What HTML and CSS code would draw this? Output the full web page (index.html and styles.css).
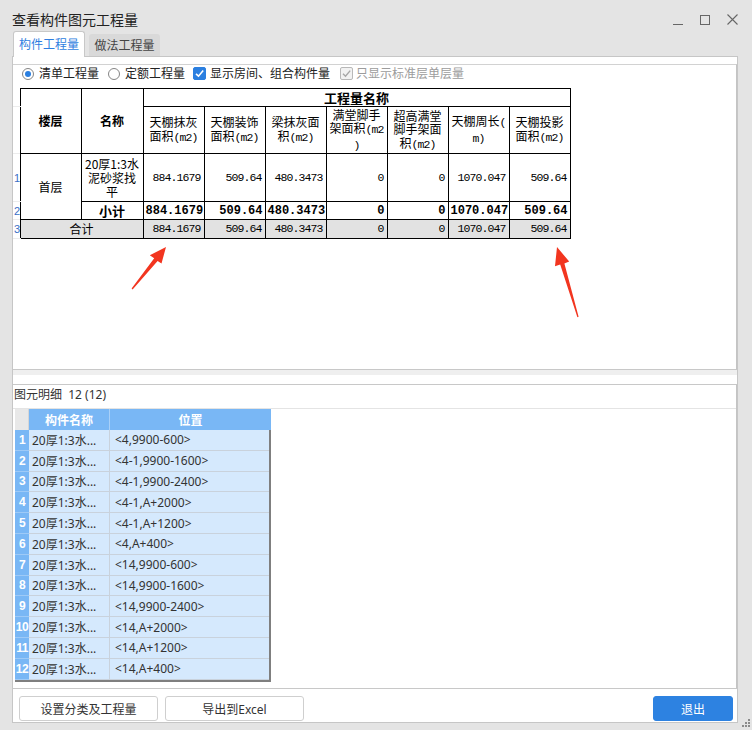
FILE: index.html
```html
<!DOCTYPE html>
<html lang="zh-CN">
<head>
<meta charset="utf-8">
<title>查看构件图元工程量</title>
<link rel="stylesheet" href="styles.css">
</head>
<body>
<div class="window">
  <div class="titlebar">
    <span class="title">查看构件图元工程量</span>
    <div class="controls">
      <svg class="ctl" width="10" height="10" viewBox="0 0 10 10"><path d="M0 9.5H10" stroke="#666" stroke-width="1"/></svg>
      <svg class="ctl max" width="10" height="10" viewBox="0 0 10 10"><rect x="0.5" y="0.5" width="9" height="9" fill="none" stroke="#666" stroke-width="1"/></svg>
      <svg class="ctl close" width="11" height="11" viewBox="0 0 11 11"><path d="M0.5 0.5L10.5 10.5M10.5 0.5L0.5 10.5" stroke="#666" stroke-width="1.1"/></svg>
    </div>
  </div>

  <div class="tabs">
    <div class="tab active">构件工程量</div>
    <div class="tab">做法工程量</div>
  </div>

  <div class="content">
    <div class="upper">
      <div class="options">
        <label class="opt"><span class="radio checked"></span>清单工程量</label>
        <label class="opt gap9"><span class="radio"></span>定额工程量</label>
        <label class="opt gap8"><span class="check checked"><svg width="11" height="11" viewBox="0 0 11 11"><path d="M2 5.8L4.5 8.2L9.2 2.6" fill="none" stroke="#fff" stroke-width="1.6"/></svg></span>显示房间、组合构件量</label>
        <label class="opt gap10 disabled"><span class="check dis"><svg width="11" height="11" viewBox="0 0 11 11"><path d="M2 5.8L4.5 8.2L9.2 2.6" fill="none" stroke="#a6a6a6" stroke-width="1.4"/></svg></span>只显示标准层单层量</label>
      </div>

      <table class="qty">
        <colgroup>
          <col class="c-rn"><col class="c-floor"><col class="c-name">
          <col class="c-q"><col class="c-q"><col class="c-q"><col class="c-q"><col class="c-q"><col class="c-q"><col class="c-q">
        </colgroup>
        <tr class="h1">
          <td class="rn"></td>
          <td rowspan="2" class="hb">楼层</td>
          <td rowspan="2" class="hb">名称</td>
          <td colspan="7" class="hb big">工程量名称</td>
        </tr>
        <tr class="h2">
          <td class="rn"></td>
          <td>天棚抹灰<br>面积<span class="m">(m2)</span></td>
          <td>天棚装饰<br>面积<span class="m">(m2)</span></td>
          <td>梁抹灰面<br>积<span class="m">(m2)</span></td>
          <td class="three">满堂脚手<br>架面积<span class="m">(m2</span><br><span class="m">)</span></td>
          <td class="three">超高满堂<br>脚手架面<br>积<span class="m">(m2)</span></td>
          <td>天棚周长<span class="m">(</span><br><span class="m">m)</span></td>
          <td>天棚投影<br>面积<span class="m">(m2)</span></td>
        </tr>
        <tr class="d1">
          <td class="rn">1</td>
          <td rowspan="2">首层</td>
          <td>20厚1:3水<br>泥砂浆找<br>平</td>
          <td class="n">884.1679</td>
          <td class="n">509.64</td>
          <td class="n">480.3473</td>
          <td class="n">0</td>
          <td class="n">0</td>
          <td class="n">1070.047</td>
          <td class="n">509.64</td>
        </tr>
        <tr class="d2">
          <td class="rn">2</td>
          <td class="hb big">小计</td>
          <td class="nb">884.1679</td>
          <td class="nb">509.64</td>
          <td class="nb">480.3473</td>
          <td class="nb">0</td>
          <td class="nb">0</td>
          <td class="nb">1070.047</td>
          <td class="nb">509.64</td>
        </tr>
        <tr class="d3">
          <td class="rn">3</td>
          <td colspan="2">合计</td>
          <td class="n">884.1679</td>
          <td class="n">509.64</td>
          <td class="n">480.3473</td>
          <td class="n">0</td>
          <td class="n">0</td>
          <td class="n">1070.047</td>
          <td class="n">509.64</td>
        </tr>
      </table>
    </div>

    <div class="splitter"></div>

    <div class="lower">
      <div class="detail-label">图元明细&nbsp;&nbsp;12 (12)</div>
      <div class="grid">
        <div class="ghead">
          <div class="gc corner"></div>
          <div class="gc gname">构件名称</div>
          <div class="gc gpos">位置</div>
        </div>
        <div class="gbody">
          <div class="grow"><div class="gn">1</div><div class="gt gname">20厚1:3水...</div><div class="gt gpos">&lt;4,9900-600&gt;</div></div>
          <div class="grow"><div class="gn">2</div><div class="gt gname">20厚1:3水...</div><div class="gt gpos">&lt;4-1,9900-1600&gt;</div></div>
          <div class="grow"><div class="gn">3</div><div class="gt gname">20厚1:3水...</div><div class="gt gpos">&lt;4-1,9900-2400&gt;</div></div>
          <div class="grow"><div class="gn">4</div><div class="gt gname">20厚1:3水...</div><div class="gt gpos">&lt;4-1,A+2000&gt;</div></div>
          <div class="grow"><div class="gn">5</div><div class="gt gname">20厚1:3水...</div><div class="gt gpos">&lt;4-1,A+1200&gt;</div></div>
          <div class="grow"><div class="gn">6</div><div class="gt gname">20厚1:3水...</div><div class="gt gpos">&lt;4,A+400&gt;</div></div>
          <div class="grow"><div class="gn">7</div><div class="gt gname">20厚1:3水...</div><div class="gt gpos">&lt;14,9900-600&gt;</div></div>
          <div class="grow"><div class="gn">8</div><div class="gt gname">20厚1:3水...</div><div class="gt gpos">&lt;14,9900-1600&gt;</div></div>
          <div class="grow"><div class="gn">9</div><div class="gt gname">20厚1:3水...</div><div class="gt gpos">&lt;14,9900-2400&gt;</div></div>
          <div class="grow"><div class="gn">10</div><div class="gt gname">20厚1:3水...</div><div class="gt gpos">&lt;14,A+2000&gt;</div></div>
          <div class="grow"><div class="gn">11</div><div class="gt gname">20厚1:3水...</div><div class="gt gpos">&lt;14,A+1200&gt;</div></div>
          <div class="grow"><div class="gn">12</div><div class="gt gname">20厚1:3水...</div><div class="gt gpos">&lt;14,A+400&gt;</div></div>
        </div>
      </div>
    </div>

    <div class="buttons">
      <button class="btn">设置分类及工程量</button>
      <button class="btn">导出到Excel</button>
      <button class="btn primary">退出</button>
    </div>
  </div>

  <svg class="grip" width="8" height="8" viewBox="0 0 8 8">
    <rect x="6" y="0" width="2" height="2" fill="#8a8a8a"/>
    <rect x="3" y="3" width="2" height="2" fill="#8a8a8a"/>
    <rect x="6" y="3" width="2" height="2" fill="#8a8a8a"/>
    <rect x="0" y="6" width="2" height="2" fill="#8a8a8a"/>
    <rect x="3" y="6" width="2" height="2" fill="#8a8a8a"/>
    <rect x="6" y="6" width="2" height="2" fill="#8a8a8a"/>
  </svg>

  <svg class="arrows" width="752" height="730" viewBox="0 0 752 730">
    <polygon points="166,247 161.5,263.5 157.6,260.9 132.6,289.4 131.6,288.6 154.2,258.2 149.8,255.2" fill="#f2351f"/>
    <polygon points="557,247 569.2,261.6 564.4,263.4 578.6,316.8 577.4,317.2 560.2,264.6 555,266.2" fill="#f2351f"/>
  </svg>
</div>
</body>
</html>
```
FILE: styles.css
```css
* { box-sizing: border-box; }
html, body { margin: 0; padding: 0; }
body {
  width: 752px;
  height: 730px;
  overflow: hidden;
  background: #e4e4e4;
  font-family: "Noto Sans", "Noto Sans CJK SC", sans-serif;
  font-size: 12px;
  color: #333;
}

.window {
  position: relative;
  width: 752px;
  height: 730px;
  background: #e4e4e4;
  display: flex;
  flex-direction: column;
}

/* title bar */
.titlebar {
  height: 31px;
  padding: 8px 14px 0 12px;
  display: flex;
  align-items: center;
}
.title {
  font-size: 14px;
  line-height: 23px;
  color: #222;
}
.controls {
  margin-left: auto;
  display: flex;
  align-items: center;
}
.ctl { display: block; }
.ctl.max { margin-left: 17px; }
.ctl.close { margin-left: 17px; }

/* tabs */
.tabs {
  height: 25px;
  display: flex;
  align-items: flex-end;
  padding-left: 13px;
  gap: 4px;
}
.tab {
  width: 71px;
  height: 22px;
  background: #d9d9d9;
  color: #444;
  font-size: 12px;
  display: flex;
  align-items: center;
  justify-content: center;
  border-radius: 3px 3px 0 0;
}
.tab.active {
  width: 72px;
  height: 26px;
  margin-bottom: -1px;
  padding-bottom: 2px;
  background: #fff;
  color: #2f7ee0;
  border: 1px solid #c8c8c8;
  border-bottom: none;
  position: relative;
  z-index: 1;
}

/* content panel */
.content {
  margin: 0 14px 0 12px;
  height: 667px;
  background: #fff;
  border: 1px solid #c6c6c6;
  padding-top: 7px;
  display: flex;
  flex-direction: column;
}

.upper {
  height: 306px;
  border-top: 1px solid #d2d2d2;
  border-right: 1px solid #c4c4c4;
  border-bottom: 1px solid #c8c8c8;
}
.options {
  height: 23px;
  display: flex;
  align-items: center;
  padding: 0 0 6px 9px;
  font-size: 12px;
  color: #222;
}
.opt {
  display: flex;
  align-items: center;
  line-height: 17px;
}
.gap9 { margin-left: 9px; }
.gap8 { margin-left: 8px; }
.gap10 { margin-left: 10px; }
.opt.disabled { color: #9c9c9c; }
.radio {
  width: 12px;
  height: 12px;
  border: 1px solid #858585;
  border-radius: 50%;
  background: #fff;
  margin-right: 5px;
  display: flex;
  align-items: center;
  justify-content: center;
}
.radio.checked::after {
  content: "";
  width: 6px;
  height: 6px;
  border-radius: 50%;
  background: #2b7fe0;
}
.check {
  width: 13px;
  height: 13px;
  border-radius: 2px;
  margin-right: 4px;
  display: flex;
  align-items: center;
  justify-content: center;
}
.check svg { display: block; }
.check.checked { background: #2b7fe0; border: 1px solid #2b7fe0; }
.check.dis { background: #f2f2f2; border: 1px solid #b8b8b8; margin-right: 3px; }

/* quantity table */
.qty {
  border-collapse: collapse;
  table-layout: fixed;
  width: 557px;
  font-family: "Noto Sans CJK SC", sans-serif;
  color: #000;
}
.c-rn { width: 7px; }
.c-floor { width: 61px; }
.c-name { width: 62px; }
.c-q { width: 61px; }
.qty td {
  border: 1px solid #000;
  padding: 0 2px;
  font-size: 12px;
  line-height: 14px;
  text-align: center;
  vertical-align: middle;
  white-space: nowrap;
  overflow: hidden;
}
.qty td.three { line-height: 13.5px; }
.qty td.rn {
  border: none;
  border-bottom: 1px solid #ececec;
  padding: 0 0 0 1px;
  color: #3a6fc6;
  font-family: "Liberation Sans", sans-serif;
  font-size: 11px;
  text-align: left;
}
.qty .h1 { height: 18px; }
.qty .h2 { height: 47px; }
.qty .d1 { height: 48px; }
.qty .d2 { height: 18px; }
.qty .d3 { height: 19px; }
.qty td.hb { font-weight: bold; }
.qty td.big { font-size: 13px; }
.qty .m {
  font-family: "Liberation Mono", monospace;
  font-size: 11.5px;
  letter-spacing: -0.9px;
}
.qty td.n {
  text-align: right;
  padding-right: 3px;
  font-family: "Liberation Mono", monospace;
  font-size: 11.5px;
  letter-spacing: -0.9px;
}
.qty td.nb {
  text-align: right;
  padding-right: 2px;
  font-family: "Liberation Mono", monospace;
  font-size: 12px;
  font-weight: bold;
}
.qty .d3 td { background: #e2e2e2; }
.qty .d3 td.rn { background: transparent; }

/* splitter */
.splitter {
  height: 5px;
  background: #efefef;
  margin-bottom: 9px;
}

/* lower panel */
.lower {
  height: 305px;
  border-top: 1px solid #c8c8c8;
  border-right: 1px solid #c4c4c4;
  border-bottom: 1px solid #c8c8c8;
}
.detail-label {
  height: 24px;
  padding: 1px 0 0 1px;
  line-height: 17px;
  font-size: 12px;
  color: #333;
  border-bottom: 1px solid #e4e4e4;
}
.grid {
  margin-left: 2px;
  width: 256px;
  position: relative;
}
.ghead {
  display: flex;
  height: 21px;
}
.gc {
  height: 21px;
  background: #79b7f5;
  color: #fff;
  font-weight: bold;
  font-size: 12px;
  display: flex;
  align-items: center;
  justify-content: center;
  border-right: 1px solid #a9d0f8;
}
.gc.corner { width: 14px; background: #e8e8e8; border-right: 1px solid #d6d6d6; }
.gc.gname { width: 81px; }
.gc.gpos { width: 161px; border-right: none; }
.gbody {
  width: 256px;
  border-right: 2px solid #7f7f7f;
  border-bottom: 2px solid #7f7f7f;
}
.grow {
  display: flex;
  height: 20.8px;
}
.gn {
  width: 14px;
  background: #79b7f5;
  color: #fff;
  font-weight: bold;
  font-family: "Liberation Sans", sans-serif;
  font-size: 12px;
  display: flex;
  align-items: center;
  justify-content: center;
  border-bottom: 1px solid #9ecaf7;
  white-space: nowrap;
  overflow: visible;
  letter-spacing: -0.5px;
}
.gt {
  background: #d5e9fd;
  color: #333;
  font-size: 12px;
  display: flex;
  align-items: center;
  border-right: 1px solid #c9d2dc;
  border-bottom: 1px solid #c9d2dc;
  white-space: nowrap;
  overflow: hidden;
}
.gt.gname { width: 81px; padding-left: 3px; }
.gt.gpos { width: 159px; padding-left: 5px; border-right: none; }

/* buttons */
.buttons {
  height: 33px;
  display: flex;
  align-items: flex-start;
  padding: 7px 4px 0 6px;
  gap: 7px;
}
.btn {
  width: 139px;
  height: 25px;
  border: 1px solid #cfcfcf;
  border-radius: 3px;
  background: #fff;
  font-family: "Noto Sans", "Noto Sans CJK SC", sans-serif;
  font-size: 12px;
  color: #333;
  padding: 0;
  display: flex;
  align-items: center;
  justify-content: center;
}
.btn.primary {
  margin-left: auto;
  width: 80px;
  background: #2d82e1;
  border-color: #2d82e1;
  color: #fff;
}

/* overlays */
.grip {
  position: absolute;
  left: 742px;
  top: 719px;
}
.arrows {
  position: absolute;
  left: 0;
  top: 0;
  pointer-events: none;
  z-index: 5;
}
```
